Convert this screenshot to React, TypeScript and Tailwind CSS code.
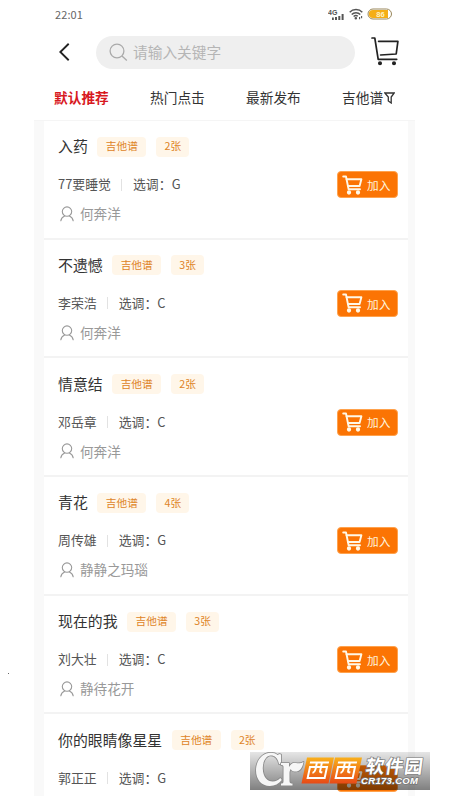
import type { ReactNode } from "react";

type Song = {
  title: string;
  count: number;
  artist: string;
  tone: string;
  user?: string;
};

const songs: Song[] = [
  { title: "入药", count: 2, artist: "77要睡觉", tone: "G", user: "何奔洋" },
  { title: "不遗憾", count: 3, artist: "李荣浩", tone: "C", user: "何奔洋" },
  { title: "情意结", count: 2, artist: "邓岳章", tone: "C", user: "何奔洋" },
  { title: "青花", count: 4, artist: "周传雄", tone: "G", user: "静静之玛瑙" },
  { title: "现在的我", count: 3, artist: "刘大壮", tone: "C", user: "静待花开" },
  { title: "你的眼睛像星星", count: 2, artist: "郭正正", tone: "G" },
];

function StatusBar() {
  return (
    <div className="flex h-[28px] items-center justify-between pr-[22px] pl-[21px] text-[#666]">
      <span className="text-[11px] leading-none tracking-[0.1px]">22:01</span>
      <div className="flex items-center">
        <svg width="17" height="13" viewBox="0 0 17 13" fill="#555">
          <text x="0" y="6.5" fontSize="7" fontWeight="700" fontFamily="Liberation Sans, sans-serif">
            4G
          </text>
          <rect x="4" y="9.5" width="1.8" height="2.5" />
          <rect x="7" y="9" width="2" height="3" />
          <rect x="10.3" y="8" width="2" height="4" />
          <rect x="13.6" y="6" width="2" height="6" />
        </svg>
        <svg className="ml-[4px]" width="14" height="12" viewBox="0 0 14 12" fill="none" stroke="#555" strokeWidth="1.4">
          <path d="M.7 4.2C4 .6 10 .6 13.3 4.2" />
          <path d="M2.7 6.4C5 4.1 9 4.1 11.3 6.4" />
          <path d="M4.6 8.5c1.3-1.2 3-1.3 4.2-.3" />
          <circle cx="6.8" cy="10.3" r=".6" fill="#555" />
          <path d="M10.6 9v2.2M12.6 8v2.2" strokeWidth="1.1" />
        </svg>
        <svg className="ml-[4px]" width="26" height="12" viewBox="0 0 26 12">
          <rect x="1" y="1" width="23.5" height="10" rx="5" fill="#fff" stroke="#99875a" strokeWidth="1" />
          <path d="M6 1.9h15v8.2H6a4.1 4.1 0 0 1 0-8.2z" fill="#f5ae16" />
          <text x="13.5" y="8.8" fontSize="7.5" fontWeight="700" fill="#fff2c4" textAnchor="middle" fontFamily="Liberation Sans, sans-serif">
            86
          </text>
        </svg>
      </div>
    </div>
  );
}

function Header() {
  return (
    <div className="flex h-[48px] items-center pl-[25px]">
      <svg width="11" height="18" viewBox="0 0 11 18" fill="none" stroke="#222" strokeWidth="1.9">
        <path d="M9.7 .8L1.3 9l8.4 8.2" />
      </svg>
      <div className="ml-[26px] flex h-[33px] w-[259px] items-center rounded-full bg-[#efefef] pl-[13px] text-[#b5b5b5]">
        <svg width="19" height="19" viewBox="0 0 19 19" fill="none" stroke="#aaa" strokeWidth="1.3">
          <circle cx="8" cy="8" r="6.9" />
          <path d="M13 13l4.8 4.4" />
        </svg>
        <span className="ml-[5px] text-[14.7px] leading-none">请输入关键字</span>
      </div>
      <svg className="-mt-[2px] ml-[15px]" width="30" height="30" viewBox="0 0 30 30" fill="none" stroke="#222" strokeWidth="1.7" strokeLinecap="round" strokeLinejoin="round">
        <path d="M2 2h2.8l3.4 21.3h18.5" />
        <path d="M8.6 5.3h19.3l-1.7 12.7-15.6 1" />
        <circle cx="10" cy="27.3" r="1.2" fill="#222" />
        <circle cx="24" cy="27.3" r="1.2" fill="#222" />
      </svg>
    </div>
  );
}

function Tabs() {
  return (
    <div className="flex h-[44px] items-center pl-[20px] text-[13.7px] leading-none text-[#333]">
      <span className="w-[96px] font-bold text-[#d8191f]">默认推荐</span>
      <span className="w-[96px]">热门点击</span>
      <span className="w-[96px]">最新发布</span>
      <span className="flex items-center">
        吉他谱
        <svg className="ml-[1px]" width="11" height="12" viewBox="0 0 11 12" fill="none" stroke="#333" strokeWidth="1.3">
          <path d="M.8 1h9.4L7.2 5v6L4.3 9V5z" />
        </svg>
      </span>
    </div>
  );
}

function Tag({ children, className }: { children: ReactNode; className: string }) {
  return (
    <span
      className={`flex h-[20px] items-center justify-center rounded-[4px] bg-[#fff6e9] text-[10.7px] leading-none text-[#de8427] ${className}`}
    >
      {children}
    </span>
  );
}

function CartIcon() {
  return (
    <svg width="21" height="20" viewBox="0 0 21 20" fill="none" stroke="#fff8e8" strokeWidth="1.9" strokeLinecap="round" strokeLinejoin="round">
      <path d="M1.2 1.5h2.8l2.6 12.7h11.4" />
      <path d="M4.6 4.2h14.8l-1.8 6.8H6" />
      <circle cx="7" cy="17.5" r="1.2" fill="#fff8e8" />
      <circle cx="16" cy="17.5" r="1.2" fill="#fff8e8" />
    </svg>
  );
}

function SongCard({ song }: { song: Song }) {
  return (
    <div className="h-[118.7px] shrink-0 border-b-2 border-[#f3f3f3] bg-white pr-[10px] pl-[14px]">
      <div className="mt-[15.8px] flex h-[20px] items-center">
        <span className="text-[14.9px] leading-none text-[#333]">{song.title}</span>
        <Tag className="ml-[9.5px] w-[49px]">吉他谱</Tag>
        <Tag className="ml-[10px] w-[33px]">{song.count}张</Tag>
      </div>
      <div className="mt-[14px] flex h-[28px] items-center text-[12.9px] leading-none text-[#555]">
        <span>{song.artist}</span>
        <span className="mr-[11px] ml-[10px] h-[12px] w-px bg-[#e2e2e2]" />
        <span>选调：{song.tone}</span>
        <button className="ml-auto flex h-[27px] w-[61px] items-center rounded-[4px] border border-[#ffa24d] bg-[#fb7404] pl-[4px] text-[#fff3dc]">
          <CartIcon />
          {song.user && <span className="ml-[4px] text-[11.7px] leading-none">加入</span>}
        </button>
      </div>
      {song.user && (
        <div className="mt-[7.3px] flex items-center text-[#999]">
          <svg className="ml-[2px]" width="14" height="16" viewBox="0 0 14 16" fill="none" stroke="#999" strokeWidth="1.1" strokeLinecap="round">
            <circle cx="7" cy="5.6" r="4.7" />
            <path d="M4.6 9.9C2.3 10.9 1.2 12.4 .8 14.8M9.4 9.9c2.3 1 3.4 2.500 3.8 4.9" />
          </svg>
          <span className="ml-[6px] text-[13.6px] leading-none">{song.user}</span>
        </div>
      )}
    </div>
  );
}

function Watermark() {
  return (
    <div className="absolute top-[752px] left-[250px] h-[38px] w-[180px] bg-linear-to-b from-black/10 to-black/50">
      <svg width="180" height="38" viewBox="0 0 180 38">
        <defs>
          <linearGradient id="tile" x1="0" y1="0" x2="0" y2="1">
            <stop offset="0" stopColor="#f9b01c" />
            <stop offset="1" stopColor="#e84a16" />
          </linearGradient>
        </defs>
        <g stroke="#888" strokeWidth="1.6" fill="#f6f6f6" paintOrder="stroke" strokeLinejoin="round">
          <path d="M31 2.5v9.5h-2C27.5 5.5 24.5 3.3 20.5 3.500c-5 .4-8 7-7.7 13.500.3 8 4.5 12.500 10 12.500 3 0 5.500-1.300 7.500-3.500l1.500 2c-3 3.700-7 6-12 6C11.5 34 6 27.5 6 18.5 6 8 12.5.8 21 .8c2.500 0 5 .7 6.500 2.200L29.500 2z" />
          <path d="M31 11h8v4c2-3.300 4.500-4.800 7-4 3 .8 5.500.2 7.500-1.200-1 7-4.500 10.200-9 9.700-2-.3-3.200-1-3.700-2.500-.8 1-1.300 2.500-1.300 4.500v7.500c0 2 1 2.500 3 2.500v2H31v-2c2 0 2.500-.6 2.500-2.500V15c0-1.500-.7-2-2.500-2z" />
        </g>
        {[57, 85].map((x) => (
          <g key={x} transform={`translate(${x} 5.5) skewX(-12)`}>
            <rect x="0" y="0" width="27" height="26" fill="url(#tile)" />
            <path
              d="M4 5h19M5 9.500h17v11H5zM11 5v6.500q0 3-2.200 4M16 5v8.500q0 1.500 2.500 1.500"
              fill="none"
              stroke="#fff"
              strokeWidth="2"
            />
          </g>
        ))}
        <g fill="#fff" stroke="#777" strokeWidth="1.4" paintOrder="stroke" fontWeight="700">
          <text transform="translate(115 20.5) skewX(-8)" fontSize="18.5" textLength="57" fontFamily="Noto Sans CJK SC, sans-serif">
            软件园
          </text>
          <text x="111" y="31.5" fontSize="9.5" fontStyle="italic" textLength="57" fontFamily="Liberation Sans, sans-serif">
            CR173.COM
          </text>
        </g>
      </svg>
    </div>
  );
}

export default function App() {
  return (
    <div className="relative h-[800px] w-[450px] overflow-hidden bg-white font-['Noto_Sans_CJK_SC',sans-serif]">
      <div className="ml-[34px] flex h-[796px] w-[381px] flex-col overflow-hidden">
        <StatusBar />
        <Header />
        <Tabs />
        <div className="flex min-h-0 flex-1 flex-col overflow-hidden border-t border-[#f5f5f5] bg-[#f9f9f9] pr-[7px] pl-[10px]">
          {songs.map((song) => (
            <SongCard key={song.title} song={song} />
          ))}
        </div>
      </div>
      <div className="absolute top-[673px] left-[8px] size-px bg-[#666]" />
      <Watermark />
    </div>
  );
}
